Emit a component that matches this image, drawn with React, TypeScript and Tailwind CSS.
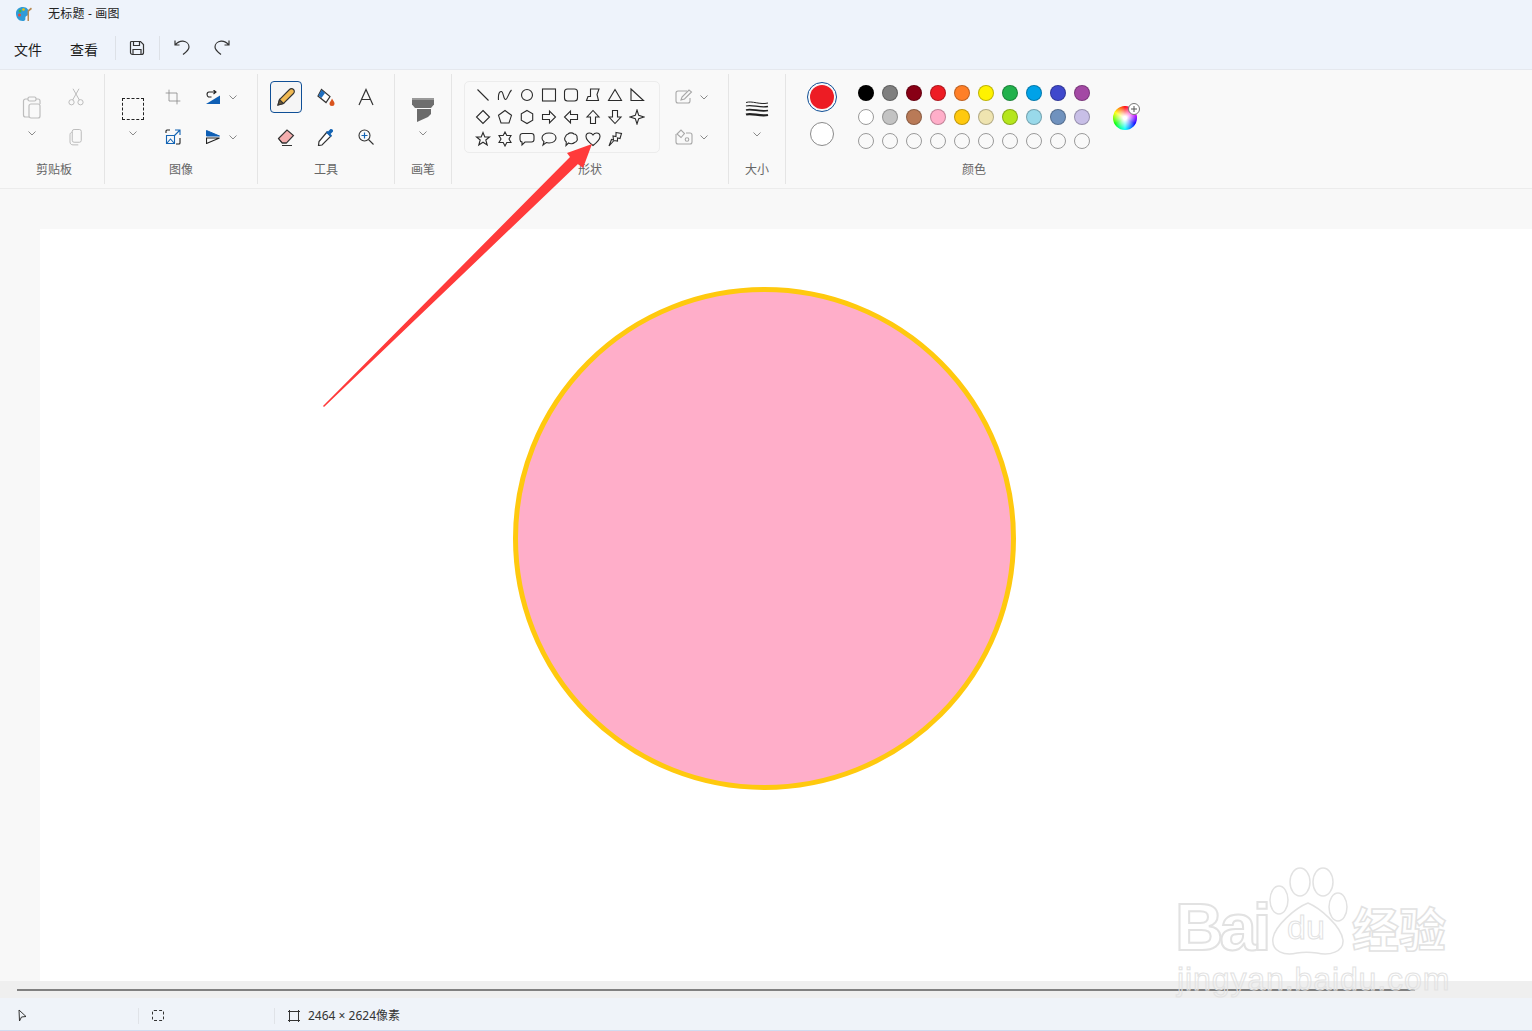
import React from 'react';

const FONT = "font-['Noto_Sans','Noto_Sans_CJK_SC',sans-serif]";

const row1 = ['#000000', '#7f7f7f', '#880015', '#ed1c24', '#ff7f27', '#fff200', '#22b14c', '#00a2e8', '#3f48cc', '#a349a4'];
const row2 = ['#ffffff', '#c3c3c3', '#b97a57', '#ffaec9', '#ffc90e', '#efe4b0', '#b5e61d', '#99d9ea', '#7092be', '#c8bfe7'];
const row3 = ['', '', '', '', '', '', '', '', '', ''];

// shape gallery, 16x16 outlines
const shapes: React.ReactNode[] = [
  <path d="M2.5 2.5 13.5 13.5" />,
  <path d="M1.500 13C1 7 2.500 4 4.500 4.500S6.500 12.500 8.500 12.500 11.500 6 14.500 3" />,
  <circle cx="8" cy="8" r="5.5" />,
  <rect x="1.5" y="2" width="13" height="12" />,
  <rect x="1.5" y="2" width="13" height="12" rx="3" />,
  <path d="M5.500 2H14L12 7.500 13.500 13.500H1.500L3 9.500H5.500Z" />,
  <path d="M8 2.5 14.5 13.5h-13z" />,
  <path d="M2 2 14.5 13.5H2z" />,
  <path d="M8 1.5 14.5 8 8 14.5 1.5 8z" />,
  <path d="M8 1.5 14.5 6.3 12 14H4L1.5 6.3z" />,
  <path d="M8 1.5 13.7 4.7v6.6L8 14.5l-5.7-3.2V4.700z" />,
  <path d="M1.500 5.500H8.500V2L14.500 8 8.500 14V10.500H1.500z" />,
  <path d="M14.500 5.500H7.500V2L1.500 8 7.500 14V10.500H14.500z" />,
  <path d="M5.500 14.500V8H2L8 1.500 14 8H10.500V14.500z" />,
  <path d="M5.500 1.500V8H2L8 14.500 14 8H10.500V1.500z" />,
  <path d="M8 1 9.700 6.300 15 8 9.700 9.700 8 15 6.300 9.700 1 8 6.300 6.300z" />,
  <path d="M8 1.500 9.800 6H14.500L10.800 9 12.200 14 8 11.200 3.800 14 5.200 9 1.500 6H6.200z" />,
  <path d="M8 1 9.800 4.500H14L12 8 14 11.500H9.800L8 15 6.200 11.500H2L4 8 2 4.500H6.200z" />,
  <path d="M3.500 2.500H12.500A2.500 2.500 0 0 1 15 5V8.500A2.500 2.500 0 0 1 12.500 11H6L3 14V11A2.500 2.500 0 0 1 1 8.500V5A2.500 2.500 0 0 1 3.500 2.500Z" />,
  <path d="M8 2C12 2 15 4 15 7S12 12 8 12C7 12 6 11.900 5.300 11.600L2 14 3 10.700C1.700 9.700 1 8.500 1 7 1 4 4 2 8 2Z" />,
  <path d="M5 3C6.500 1.500 9.500 1.500 11 3 13 3 14.500 5 14 7 15 9 13.500 11 11.500 11.500 10 13 7 13 5.500 12L3 14.500 3.300 11C1.500 9.500 1.500 7 2.500 5.500 3 4 4 3.200 5 3Z" />,
  <path d="M8 14.500C3.500 11 1 8.500 1 5.500 1 3.300 2.700 2 4.500 2 6 2 7.300 2.800 8 4 8.700 2.800 10 2 11.500 2 13.300 2 15 3.300 15 5.500 15 8.500 12.500 11 8 14.500Z" />,
  <path d="M9 1.500 14.500 2.500 13 7.500 10.500 7 10.500 10 7 9.500 2 15 4.500 8.500 6.500 9 6 5 9 5.500Z" />,
];

const Chevron = () => (
  <svg width="10" height="10" viewBox="0 0 10 10" fill="none" stroke="#8a8a8a" strokeWidth="1">
    <path d="M1.500 3.500 5 7 8.500 3.500" />
  </svg>
);

const Icon = ({ children, size = 24 }: { children: React.ReactNode; size?: number }) => (
  <svg width={size} height={size} viewBox="0 0 24 24" fill="none" stroke="#333" strokeWidth="1.200">
    {children}
  </svg>
);

const Cell = ({ children, className = '' }: { children: React.ReactNode; className?: string }) => (
  <div className={`flex h-10 w-10 items-center justify-center ${className}`}>{children}</div>
);

const Group = ({ label, className, labelClass = '', children }: { label: string; className: string; labelClass?: string; children: React.ReactNode }) => (
  <div className={`flex h-[110px] shrink-0 flex-col ${className}`}>
    <div className="h-[84px] pt-[3px]">{children}</div>
    <div className={`flex h-[23px] items-center justify-center text-xs text-[#666] ${labelClass}`}>{label}</div>
  </div>
);

export default function App() {
  return (
    <div className={`relative flex h-[1031px] w-[1532px] flex-col overflow-hidden bg-[#f8f8f8] ${FONT}`}>
      {/* title bar */}
      <div className="flex h-[30px] items-center bg-[#eef3fb] pb-[3px] pl-4">
        <svg width="16" height="16" viewBox="0 0 16 16">
          <path d="M7 1C3 1 0 3.500 0 7.500S2.500 15 6.500 15 9 12.500 9.500 11 13 10 13 7 11 1 7 1Z" fill="#2f9bd8" />
          <circle cx="4" cy="5" r="1.500" fill="#3cb54a" />
          <circle cx="7.500" cy="3.500" r="1.300" fill="#f2c100" />
          <circle cx="3.500" cy="9" r="1.500" fill="#e8483a" />
          <path d="M12 4 15 1.500 16 3 13 5.500 13 15H11.500V5Z" fill="#b98a52" />
        </svg>
        <span className="ml-4 text-xs tracking-[0.2px] text-[#222]">无标题 - 画图</span>
      </div>
      {/* menu row */}
      <div className="flex h-[40px] items-center border-b border-[#e5e8ee] bg-[#eef3fb] text-sm text-[#1c1c1c]">
        <span className="ml-[14px] w-[28px]">文件</span>
        <span className="ml-[28px] w-[28px]">查看</span>
        <div className="ml-[17px] -mt-[3px] h-6 w-px bg-[#dde1e7]" />
        <div className="ml-[13px] -mt-[3px] flex w-[16px] justify-center">
          <svg width="16" height="16" viewBox="0 0 16 16" fill="none" stroke="#333" strokeWidth="1.200">
            <path d="M2.500 1.500H11.500L14.500 4.500V12.500A2 2 0 0 1 12.500 14.500H3.500A2 2 0 0 1 1.500 12.500V2.500A1 1 0 0 1 2.500 1.500Z" />
            <path d="M4.500 1.500V5.500H10.500V1.500M4 14.500V9.500H12V14.500" />
          </svg>
        </div>
        <div className="ml-[14px] -mt-[3px] h-6 w-px bg-[#dde1e7]" />
        <div className="ml-[14px] -mt-[5px]">
          <svg width="16" height="16" viewBox="0 0 16 16" fill="none" stroke="#333" strokeWidth="1.200">
            <path d="M1 1.500V6H5.500M1.200 6C3.500 3.200 6 2 9 2.200 12.500 2.500 15 5 15 8 15 10.500 13 12.500 9 15.500" />
          </svg>
        </div>
        <div className="ml-[24px] -mt-[5px]">
          <svg width="16" height="16" viewBox="0 0 16 16" fill="none" stroke="#333" strokeWidth="1.200">
            <path d="M15 1.500V6H10.500M14.800 6C12.500 3.200 10 2 7 2.200 3.500 2.500 1 5 1 8 1 10.500 3 12.500 7 15.500" />
          </svg>
        </div>
      </div>

      {/* ribbon */}
      <div className="flex h-[119px] border-b border-[#ececec] bg-[#f9f9f9] pt-1">
        <Group label="剪贴板" labelClass="pl-[4px]" className="w-[105px] border-r border-[#e5e5e5]">
          <div className="flex gap-1 pl-3">
            <div className="flex w-10 flex-col items-center pt-[19px]">
              <svg width="20" height="24" viewBox="0 0 20 24" fill="none" stroke="#bdbdbd" strokeWidth="1.200">
                <path d="M6 3H3.500A2 2 0 0 0 1.500 5V19A2 2 0 0 0 3.500 21H7M14 3H16A2 2 0 0 1 18 5V8" />
                <rect x="6" y="1" width="8" height="4" rx="1.500" />
                <rect x="7" y="8" width="11" height="14" rx="2" />
              </svg>
              <div className="mt-[8px]"><Chevron /></div>
            </div>
            <div>
              <Cell>
                <Icon size={18}>
                  <g stroke="#b5b5b5">
                    <circle cx="6" cy="19" r="3.500" /><circle cx="18" cy="19" r="3.500" />
                    <path d="M7.500 16 16 1M16.500 16 8 1" />
                  </g>
                </Icon>
              </Cell>
              <Cell>
                <Icon size={18}>
                  <g stroke="#b5b5b5">
                    <rect x="7" y="2" width="12" height="17" rx="2.500" />
                    <path d="M7 5.500C5 6 4 7 4 9V18.500C4 21 5.500 22.500 8 22.500H15" />
                  </g>
                </Icon>
              </Cell>
            </div>
          </div>
        </Group>

        <Group label="图像" className="w-[153px] border-r border-[#e5e5e5]">
          <div className="flex pl-2">
            <div className="flex w-10 flex-col items-center pt-[21px]">
              <div className="h-[22px] w-[22px] border border-dashed border-[#222]" />
              <div className="mt-[8px]"><Chevron /></div>
            </div>
            <div>
              <Cell>
                <Icon size={16}>
                  <path d="M6 1V18H23M1 6H18V23" stroke="#888" />
                </Icon>
              </Cell>
              <Cell>
                <svg width="16" height="16" viewBox="0 0 16 16" fill="none">
                  <path d="M10 1H15V6M9 7 15 1" stroke="#1464b4" strokeWidth="1.100" />
                  <path d="M5 1H2A1 1 0 0 0 1 2V4M15 9V14A1 1 0 0 1 14 15H11" stroke="#222" strokeWidth="1.100" />
                  <path d="M1.500 6.500H9.500V14.500H1.500Z" stroke="#1464b4" strokeWidth="1.100" />
                  <path d="M2 14 5.500 10 9 14" stroke="#1464b4" strokeWidth="1.100" />
                </svg>
              </Cell>
            </div>
            <div className="w-[55px]">
              <div className="flex h-10 items-center pl-[13px]">
                <svg width="14" height="14" viewBox="0 0 14 14" fill="none">
                  <path d="M14 5.500V14H0Z" fill="#0f5fb4" />
                  <path d="M9.500 2H3C0.500 2 0.500 6 2.500 7H5.500M7.500 0 10 2 7.500 4" stroke="#222" strokeWidth="1.100" />
                </svg>
                <div className="ml-[8px]"><Chevron /></div>
              </div>
              <div className="flex h-10 items-center pl-[13px]">
                <svg width="14" height="14" viewBox="0 0 14 14" fill="none">
                  <path d="M0.500 0.500 13.500 6H0.500Z" fill="#0f5fb4" stroke="#0f5fb4" />
                  <path d="M0.500 8H13.500L0.500 13.500Z" stroke="#222" strokeWidth="1.100" />
                </svg>
                <div className="ml-[8px]"><Chevron /></div>
              </div>
            </div>
          </div>
        </Group>

        <Group label="工具" className="w-[137px] border-r border-[#e5e5e5]">
          <div className="grid grid-cols-[40px_40px_40px] pl-2">
            <Cell>
              <div className="flex h-8 w-8 items-center justify-center rounded-[4px] border border-[#0f4f96] bg-[#f5f5f5]">
                <svg width="18" height="18" viewBox="0 0 18 18" stroke="#333" strokeWidth="1.100">
                  <path d="M1 17 2.500 11.500 12.500 1.500A2 2 0 0 1 16.500 5.500L6.500 15.500Z" fill="#f0b952" />
                  <path d="M1 17 2.500 11.500 6.500 15.500Z" fill="#6b5a3a" />
                </svg>
              </div>
            </Cell>
            <Cell>
              <svg width="18" height="18" viewBox="0 0 18 18" fill="none">
                <path d="M4.500 1.500 13 8.500 9 14.500 1 8Z" fill="#fff" stroke="#333" strokeWidth="1.200" />
                <path d="M1.500 7.500 4.500 2 8 5 4.500 10Z" fill="#1f6fc0" />
                <path d="M15 10.500C16.500 13 17.500 14 17.500 15.500A2.500 2.500 0 0 1 12.500 15.500C12.500 14 14 13 15 10.500Z" fill="#d9541e" />
              </svg>
            </Cell>
            <Cell>
              <svg width="18" height="18" viewBox="0 0 18 18" fill="none" stroke="#333" strokeWidth="1.200">
                <path d="M2 17 9 1.500 16 17M4.500 11.500H13.500" />
              </svg>
            </Cell>
            <Cell>
              <svg width="18" height="18" viewBox="0 0 18 18" stroke="#333" strokeWidth="1.100">
                <path d="M1.500 10.500 10 2 16.500 7.500 9.500 15H5.500Z" fill="#f4aeae" />
                <path d="M1.500 10.500 5 15H9.500M5 17.500H15" fill="none" />
              </svg>
            </Cell>
            <Cell>
              <svg width="18" height="18" viewBox="0 0 18 18" fill="none">
                <path d="M10 4 14 8 5 17 1.500 17.500 2 13.500Z" stroke="#333" strokeWidth="1.200" fill="#fff" />
                <path d="M9 4.500 13.500 9 15 7.500 13.500 6 16 3.500A2 2 0 0 0 13.500 1L11 3.500 10.500 3Z" fill="#1464b4" />
              </svg>
            </Cell>
            <Cell>
              <svg width="16" height="16" viewBox="0 0 16 16" fill="none">
                <circle cx="6.500" cy="6.500" r="5.500" stroke="#333" strokeWidth="1.100" />
                <path d="M10.500 10.500 15.500 15.500" stroke="#333" strokeWidth="1.100" />
                <path d="M6.500 3.500V9.500M3.500 6.500H9.500" stroke="#1464b4" strokeWidth="1.200" />
              </svg>
            </Cell>
          </div>
        </Group>

        <Group label="画笔" className="w-[57px] border-r border-[#e5e5e5]">
          <div className="flex flex-col items-center pt-[21px]">
            <svg width="22" height="24" viewBox="0 0 22 24">
              <path d="M0 0H22V6.500L19 10H3L0 6.500Z" fill="#6e6e6e" />
              <path d="M0 0H22V2H0Z" fill="#9a9a9a" />
              <path d="M5 11H19V16L16 19 5 24Z" fill="#6b6b6b" />
            </svg>
            <div className="mt-[6px]"><Chevron /></div>
          </div>
        </Group>

        <Group label="形状" className="w-[277px] border-r border-[#e5e5e5]">
          <div className="flex pl-3">
            <div className="mt-[4px] grid h-[72px] w-[196px] grid-cols-[repeat(8,22px)] content-start rounded-[5px] border border-[#ececec] pl-[7px] pt-[2px]">
              {shapes.map((s, i) => (
                <div key={i} className="flex h-[22px] w-[22px] items-center justify-center">
                  <svg width="16" height="16" viewBox="0 0 16 16" fill="none" stroke="#2b2b2b" strokeWidth="1.100">
                    {s}
                  </svg>
                </div>
              ))}
            </div>
            <div className="ml-[15px]">
              <div className="flex h-10 items-center">
                <svg width="18" height="16" viewBox="0 0 18 16" fill="none" stroke="#a8a8a8" strokeWidth="1.100">
                  <path d="M12 2H3A2 2 0 0 0 1 4V12A2 2 0 0 0 3 14H13A2 2 0 0 0 15 12V9" />
                  <path d="M6 11 7 8 14 1 16.500 3 9.500 10Z" />
                </svg>
                <div className="ml-[6px]"><Chevron /></div>
              </div>
              <div className="flex h-10 items-center">
                <svg width="18" height="16" viewBox="0 0 18 16" fill="none" stroke="#a8a8a8" strokeWidth="1.100">
                  <path d="M1 5V13A2 2 0 0 0 3 15H15A2 2 0 0 0 17 13V6A2 2 0 0 0 15 4H11" />
                  <path d="M2 5 6 1 9.500 4.500 6 8.500Z" />
                  <circle cx="12" cy="10.500" r="1.800" />
                </svg>
                <div className="ml-[6px]"><Chevron /></div>
              </div>
            </div>
          </div>
        </Group>

        <Group label="大小" className="w-[57px] border-r border-[#e5e5e5]">
          <div className="flex flex-col items-center pt-[24px]">
            <svg width="24" height="18" viewBox="0 0 24 18" fill="none" stroke="#222">
              <path d="M1 1.500C7 -0.500 15 4 23 2" strokeWidth="1" />
              <path d="M1 5C7 3 15 7.500 23 5.500" strokeWidth="1.300" />
              <path d="M1 9C7 7 15 11.500 23 9.500" strokeWidth="1.700" />
              <path d="M1 13.500C7 11.500 15 16 23 14" strokeWidth="2.300" />
            </svg>
            <div className="mt-[10px]"><Chevron /></div>
          </div>
        </Group>

        <Group label="颜色" className="w-[376px]">
          <div className="flex">
            <div className="ml-[18px] flex w-9 flex-col items-center pt-[5px]">
              <div className="flex h-[30px] w-[30px] items-center justify-center rounded-full border border-[#0f4f96]">
                <div className="h-6 w-6 rounded-full bg-[#ed1c24]" />
              </div>
              <div className="mt-[10px] h-6 w-6 rounded-full border border-[#8a8a8a] bg-white" />
            </div>
            <div className="ml-[14px] mt-[4px] grid w-[240px] grid-cols-10 content-start">
              {[...row1, ...row2, ...row3].map((c, i) => (
                <div key={i} className="flex h-6 w-6 items-center justify-center">
                  <div
                    className={`h-4 w-4 rounded-full border ${i === 10 || i >= 20 ? 'border-[#9a9a9a]' : 'border-[#00000040]'}`}
                    style={{ backgroundColor: c || 'transparent' }}
                  />
                </div>
              ))}
            </div>
            <div className="relative ml-[19px] mt-[29px] h-6 w-6">
              <div className="h-6 w-6 rounded-full bg-[conic-gradient(#ff0000,#ff00ff,#0000ff,#00ffff,#00ff00,#ffff00,#ff0000)]">
                <div className="h-6 w-6 rounded-full bg-[radial-gradient(circle,#ffffff_10%,#ffffff00_70%)]" />
              </div>
              <div className="absolute -right-[3px] -top-[3px] flex h-3 w-3 items-center justify-center rounded-full border border-[#777] bg-white">
                <svg width="8" height="8" viewBox="0 0 8 8" stroke="#555"><path d="M4 1V7M1 4H7" /></svg>
              </div>
            </div>
          </div>
        </Group>
      </div>

      {/* work area */}
      <div className="flex-1 pl-10 pt-10">
        <div className="relative h-full bg-white">
          <svg className="absolute left-[473px] top-[58px]" width="503" height="503" viewBox="0 0 503 503">
            <circle cx="251.500" cy="251.500" r="249" fill="#ffaec9" stroke="#ffc90e" strokeWidth="5" />
          </svg>
        </div>
      </div>

      {/* scrollbar */}
      <div className="flex h-[17px] items-center bg-[#efefef] pl-[17px]">
        <div className="h-[2px] w-[1398px] bg-[#808080]" />
      </div>

      {/* status bar */}
      <div className="flex h-[33px] items-center border-b border-[#cfdcf0] bg-[#eff3f9] pt-[3px] text-xs text-[#333]">
        <div className="flex h-4 w-[139px] items-center border-r border-[#e0e3e8] pl-[18px]">
          <svg width="9" height="13" viewBox="0 0 9 13" fill="none" stroke="#333"><path d="M1 1 8 7.500 3.500 8 1.500 12Z" /></svg>
        </div>
        <div className="flex h-4 w-[136px] items-center border-r border-[#e0e3e8] pl-[13px]">
          <div className="h-[11px] w-[12px] rounded-[2px] border border-dashed border-[#333]" />
        </div>
        <div className="flex items-center pl-[13px]">
          <svg width="12" height="12" viewBox="0 0 12 12" fill="none" stroke="#333"><path d="M1.500 0V12M10.500 0V12M0 1.500H12M0 10.500H12" /></svg>
          <span className="ml-[8px]">2464 × 2624像素</span>
        </div>
      </div>

      {/* annotation arrow */}
      <svg className="absolute left-0 top-0" width="1532" height="1031" fill="#ff3a3a">
        <polygon points="323,406 570,157 567,153 592,144 583,168 578,164 324,407" />
      </svg>

      {/* watermark */}
      <div className="absolute left-[1177px] top-[866px] h-[135px] w-[280px] font-['Liberation_Sans','Noto_Sans_CJK_SC',sans-serif] text-transparent">
        <svg className="absolute left-[88px] top-0" width="90" height="90" viewBox="0 0 90 90" fill="#fff" stroke="#e2e2e2" strokeWidth="1.500">
          <ellipse cx="35" cy="16" rx="10" ry="14" />
          <ellipse cx="58" cy="16" rx="10" ry="14" />
          <ellipse cx="14" cy="34" rx="9" ry="14" />
          <ellipse cx="73" cy="41" rx="9" ry="14" />
          <path d="M43 37C55 42 76 60 78 74 79 86 64 90 52 87 45 86 38 86 32 87 20 90 6 86 8 72 10 60 30 42 43 37Z" />
        </svg>
        <span className="absolute -left-[2px] top-[27px] text-[67px] font-bold leading-none tracking-[-4px] [-webkit-text-stroke:2px_#e2e2e2]">Bai</span>
        <span className="absolute left-[110px] top-[44px] text-[34px] leading-none [-webkit-text-stroke:1px_#e2e2e2]">du</span>
        <span className="absolute left-[175px] top-[41px] text-[47px] font-bold leading-none [-webkit-text-stroke:1.500px_#e2e2e2]">经验</span>
        <span className="absolute left-0 top-[97px] text-[32px] leading-none tracking-[0.9px] [-webkit-text-stroke:1px_#e2e2e2]">jingyan.baidu.com</span>
      </div>
    </div>
  );
}
